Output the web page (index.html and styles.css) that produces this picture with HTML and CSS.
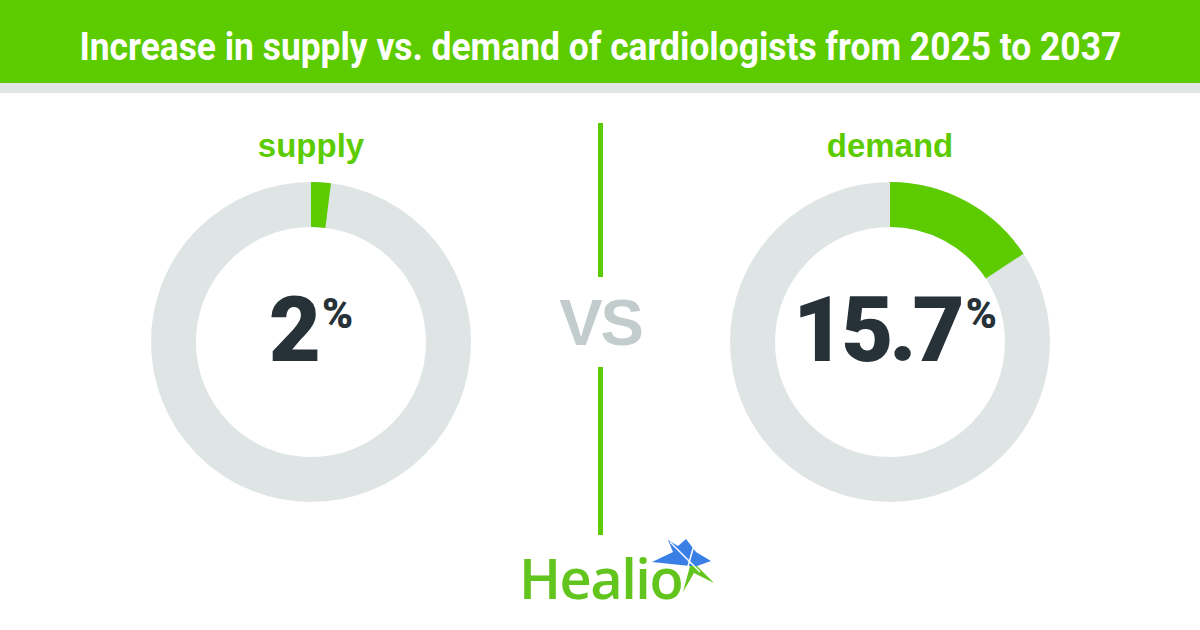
FILE: index.html
```html
<!DOCTYPE html>
<html lang="en">
<head>
<meta charset="utf-8">
<title>Supply vs demand of cardiologists</title>
<link rel="stylesheet" href="styles.css">
</head>
<body>
<div class="page">
  <header class="header">
    <h1 class="title">Increase in supply vs. demand of cardiologists from 2025 to 2037</h1>
  </header>
  <div class="strip"></div>
  <main class="main">
    <section class="col">
      <div class="label">supply</div>
      <div class="donut">
        <svg class="ring" viewBox="0 0 320 320" width="320" height="320">
          <circle cx="160" cy="160" r="137.5" class="track"/>
          <circle cx="160" cy="160" r="137.5" class="arc" pathLength="100" stroke-dasharray="2 98" transform="rotate(-90 160 160)"/>
        </svg>
        <div class="value"><span class="num">2</span><span class="pct">%</span></div>
      </div>
    </section>
    <div class="mid">
      <div class="line line-top"></div>
      <div class="vs">VS</div>
      <div class="line line-bottom"></div>
      <div class="logo">
        <span class="logo-text">Healio</span>
        <svg class="star" viewBox="0 0 80 70" width="80" height="70">
          <polygon fill="#3a7fe6" points="12,27 33,17 28,5 38,11 46,4 56,17 71,26 57,31 50,31"/>
          <polygon fill="#62c51d" points="50,31 57,31 74,48 54,38 43,57"/>
          <line x1="30" y1="7" x2="60" y2="37" stroke="#fff" stroke-width="1.5"/>
          <line x1="54" y1="10" x2="45" y2="42" stroke="#fff" stroke-width="1.5"/>
        </svg>
      </div>
    </div>
    <section class="col">
      <div class="label">demand</div>
      <div class="donut">
        <svg class="ring" viewBox="0 0 320 320" width="320" height="320">
          <circle cx="160" cy="160" r="137.5" class="track"/>
          <circle cx="160" cy="160" r="137.5" class="arc" pathLength="100" stroke-dasharray="15.7 84.3" transform="rotate(-90 160 160)"/>
        </svg>
        <div class="value value-wide"><span class="num">15.7</span><span class="pct">%</span></div>
      </div>
    </section>
  </main>
</div>
</body>
</html>
```
FILE: styles.css
```css
html, body {
  margin: 0;
  padding: 0;
  background: #ffffff;
}

.page {
  width: 1200px;
  height: 630px;
  overflow: hidden;
  background: #ffffff;
}

.header {
  height: 83px;
  box-sizing: border-box;
  padding-top: 24px;
  background: #5ccc00;
  text-align: center;
}

.title {
  margin: 0;
  display: inline-block;
  font-family: Roboto, "Liberation Sans", sans-serif;
  font-weight: 700;
  font-size: 39px;
  line-height: 46px;
  color: #ffffff;
  white-space: nowrap;
  transform: scaleX(0.907);
  transform-origin: center top;
}

.strip {
  height: 10px;
  background: #dfe5e5;
}

.main {
  display: flex;
  padding-left: 151px;
}

.col {
  width: 320px;
  display: flex;
  flex-direction: column;
  align-items: center;
  padding-top: 36px;
}

.label {
  font-family: "Liberation Sans", Arial, sans-serif;
  font-weight: 700;
  font-size: 33px;
  line-height: 33px;
  color: #5ccc00;
  margin-bottom: 20px;
}

.donut {
  display: grid;
  width: 320px;
  height: 320px;
}

.donut > * {
  grid-area: 1 / 1;
}

.track {
  fill: none;
  stroke: #dfe5e5;
  stroke-width: 45;
}

.arc {
  fill: none;
  stroke: #5ccc00;
  stroke-width: 45;
}

.value {
  align-self: center;
  justify-self: center;
  display: flex;
  align-items: flex-start;
  margin-top: -22px;
  font-family: Roboto, "Liberation Sans", sans-serif;
  font-weight: 900;
  color: #263238;
}

.value-wide {
  margin-left: 10px;
}

.num {
  font-size: 90px;
  line-height: 90px;
  letter-spacing: -4px;
}

.pct {
  font-size: 42px;
  line-height: 42px;
  margin-top: 7px;
  margin-left: 5px;
}

.mid {
  width: 5px;
  margin: 0 127px;
  display: flex;
  flex-direction: column;
  align-items: center;
  padding-top: 30px;
}

.line {
  width: 5px;
  background: #5ccc00;
  flex: none;
}

.line-top {
  height: 154px;
}

.line-bottom {
  height: 168px;
}

.vs {
  margin: 13px 0 12px;
  font-family: "Liberation Sans", Arial, sans-serif;
  font-weight: 700;
  font-size: 65px;
  line-height: 65px;
  letter-spacing: -2px;
  color: #c3cccd;
  white-space: nowrap;
}

.logo {
  position: relative;
  margin-top: 14px;
  white-space: nowrap;
}

.logo-text {
  display: block;
  font-family: "Open Sans", "Liberation Sans", sans-serif;
  font-weight: 600;
  font-size: 56px;
  line-height: 56px;
  letter-spacing: -1.5px;
  color: #62c51d;
}

.star {
  position: absolute;
  left: calc(100% - 42px);
  top: -14px;
}
```
